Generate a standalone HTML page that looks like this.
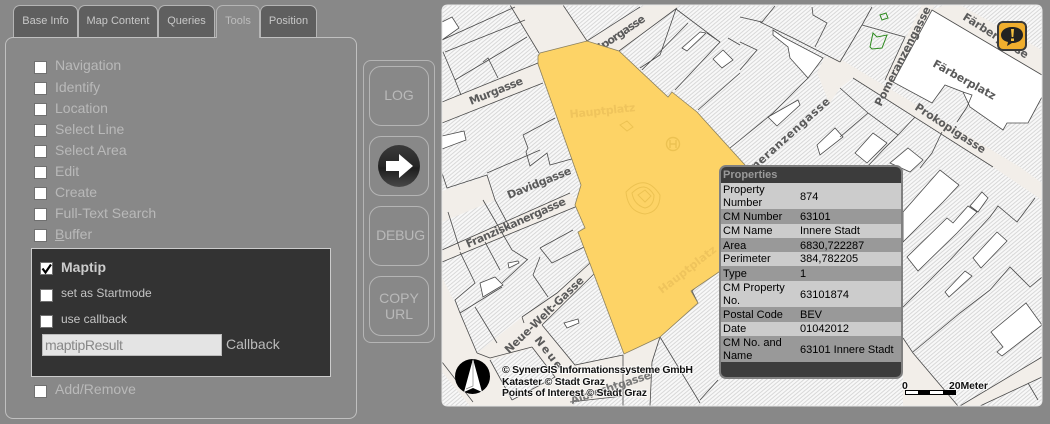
<!DOCTYPE html>
<html><head><meta charset="utf-8">
<style>
html,body{margin:0;padding:0;width:1050px;height:424px;overflow:hidden;background:#888;font-family:"Liberation Sans",sans-serif}
.a{position:absolute;box-sizing:border-box}
.tab{top:5px;height:33px;background:#5f5f5f;border:1px solid #b5b5b5;border-bottom:0;border-radius:7px 7px 0 0;color:#c8c8c8;font-size:11px;line-height:30px;text-align:center}
.cb{background:#fff;border:1px solid #707070;width:13px;height:13px}
.l{font-size:14px;line-height:16px;color:#b9b9b9;left:55px;white-space:nowrap}
.btn{left:369px;width:60px;height:60px;border:1px solid #b5b5b5;border-radius:12px;color:#b9b9b9;font-size:14px;line-height:16px;text-align:center}
.r{left:721px;width:180px;font-size:11px;line-height:13px;color:#000}
.r span{position:absolute;white-space:nowrap;margin-top:1px}
.r .k{left:2px;width:70px;white-space:normal}
.r .v{left:79px}
.lt{background:#ccc}.dk{background:#999}
</style></head><body>

<div class="a tab" style="left:13px;width:65px">Base Info</div>
<div class="a tab" style="left:78px;width:80px">Map Content</div>
<div class="a tab" style="left:158px;width:57px">Queries</div>
<div class="a tab" style="left:216px;width:44px;background:#888;color:#bdbdbd;z-index:3">Tools</div>
<div class="a tab" style="left:260px;width:57px">Position</div>

<div class="a" style="left:5px;top:37px;width:352px;height:382px;border:1px solid #c0c0c0;border-radius:8px;background:#888"></div>

<div class="a cb" style="left:34px;top:61px"></div><div class="a l" style="top:57px">Navigation</div>
<div class="a cb" style="left:34px;top:82px"></div><div class="a l" style="top:79px">Identify</div>
<div class="a cb" style="left:34px;top:103px"></div><div class="a l" style="top:100px">Location</div>
<div class="a cb" style="left:34px;top:124px"></div><div class="a l" style="top:121px">Select Line</div>
<div class="a cb" style="left:34px;top:145px"></div><div class="a l" style="top:142px">Select Area</div>
<div class="a cb" style="left:34px;top:166px"></div><div class="a l" style="top:163px">Edit</div>
<div class="a cb" style="left:34px;top:187px"></div><div class="a l" style="top:184px">Create</div>
<div class="a cb" style="left:34px;top:208px"></div><div class="a l" style="top:205px">Full-Text Search</div>
<div class="a cb" style="left:34px;top:229px"></div><div class="a l" style="top:226px"><u>B</u>uffer</div>

<div class="a" style="left:31px;top:248px;width:300px;height:129px;background:#333;border:1px solid #ccc"></div>
<div class="a cb" style="left:40px;top:262px"></div>
<svg class="a" style="left:40px;top:262px" width="13" height="13"><path d="M2.5 6.5 L5.5 10.5 L11 2.5" fill="none" stroke="#000" stroke-width="2.2"/></svg>
<div class="a l" style="left:61px;top:259px;font-weight:bold;color:#ccc">Maptip</div>
<div class="a cb" style="left:40px;top:289px"></div>
<div class="a l" style="left:61px;top:285px;font-size:12px;color:#c4c4c4">set as Startmode</div>
<div class="a cb" style="left:40px;top:315px"></div>
<div class="a l" style="left:61px;top:311px;font-size:12px;color:#c4c4c4">use callback</div>
<div class="a" style="left:42px;top:334px;width:180px;height:22px;background:#e4e4e4;border:1px solid #bbb;color:#888;font-size:14px;line-height:20px;padding-left:2px;letter-spacing:-.35px">maptipResult</div>
<div class="a l" style="left:226px;top:336px;color:#bbb">Callback</div>
<div class="a cb" style="left:34px;top:385px"></div><div class="a l" style="top:381px">Add/Remove</div>

<div class="a" style="left:363px;top:60px;width:72px;height:283px;border:1px solid #b5b5b5;border-radius:8px"></div>
<div class="a btn" style="top:66px;line-height:56px">LOG</div>
<div class="a btn" style="top:136px"></div>
<svg class="a" style="left:378px;top:145px" width="42" height="42">
<defs><linearGradient id="g" x1="0" y1="0" x2="0" y2="1"><stop offset="0" stop-color="#3a3a3a"/><stop offset=".5" stop-color="#262626"/><stop offset=".55" stop-color="#1e1e1e"/><stop offset="1" stop-color="#484848"/></linearGradient></defs>
<circle cx="21" cy="21" r="21" fill="url(#g)"/>
<path d="M8 16 H21 V9 L35 21 L21 33 V26 H8 Z" fill="#fff"/></svg>
<div class="a btn" style="top:206px;line-height:56px;padding-left:3px;white-space:nowrap;letter-spacing:-.2px">DEBUG</div>
<div class="a btn" style="top:276px;padding-top:13px">COPY<br>URL</div>

<svg class="a" style="left:0;top:0" width="1050" height="424" viewBox="0 0 1050 424">
<defs>
<pattern id="h" width="3" height="3" patternUnits="userSpaceOnUse" patternTransform="rotate(-40)"><rect width="3" height="3" fill="#f8f8f8"/><rect width="3" height="1" fill="#d8d8d8"/></pattern>
<clipPath id="mc"><rect x="442" y="5" width="600" height="401" rx="6"/></clipPath>
</defs>
<g clip-path="url(#mc)">
<rect x="442" y="5" width="600" height="401" fill="url(#h)"/>
<!-- streets -->
<g fill="#f2eee9">
<polygon points="442,102 538,63 543,83 442,123"/>
<polygon points="510,5 563,5 590,43 540,56"/>
<polygon points="587,41 645,5 680,5 619,52"/>
<polygon points="442,250 570,193 580,205 442,262"/>
<polygon points="442,191 487,176 495,200 442,222"/>
<polygon points="442,277 460,313 477,353 522,317 557,293 590,263 596,272 542,325 575,365 623,355 660,337 652,360 650,406 442,406"/>
<polygon points="825,57 842,60 1020,167 1042,183 1042,200 993,167 853,78 840,88 830,103 828,100 817,73"/>
<polygon points="922,5 935,5 893,84 885,80"/>
<polygon points="945,5 960,5 1042,50 1042,75 932,10"/>
<polygon points="903,338 913,353 958,406 903,406"/>
<polygon points="960,406 1042,357 1042,377 980,406"/>
</g>
<g fill="url(#h)">
<polygon points="490,360 532,348 555,377 512,400"/>
<polygon points="442,372 470,406 442,406"/>
<polygon points="570,402 623,396 650,400 650,406 575,406"/>
</g>
<!-- white buildings -->
<g fill="#fff" stroke="#4a4a4a" stroke-width=".8">
<polygon points="932,10 1042,75 1042,97 1028,123 1007,123 1003,130 970,107 963,92 945,85 932,103 893,82"/>
<polygon points="442,22 452,17 459,28 442,40"/>
<polygon points="442,136 464,131 466,140 442,149"/>
<polygon points="903,212 940,170 959,185 943,202 903,242"/>
<polygon points="907,257 947,218 953,223 968,206 977,212 957,233 918,271"/>
<polygon points="970,206 982,192 988,198 978,212"/>
<polygon points="973,258 997,232 1007,241 981,268"/>
<polygon points="945,292 965,271 972,276 949,297"/>
<polygon points="991,332 1026,303 1042,325 1002,356 997,352 1003,347"/>
<polygon points="768,117 798,100 800,105 777,126"/>
<polygon points="817,145 835,128 843,137 820,155"/>
<polygon points="855,153 873,133 887,143 867,163"/>
<polygon points="890,163 908,148 923,160 910,172"/>
<polygon points="773,30 783,37 823,58 808,78 790,58 788,47 773,35"/>
<polygon points="480,283 495,277 503,285 483,297"/>
<polygon points="682,48 700,32 706,33 687,51"/>
<polygon points="713,59 723,50 733,60 722,68"/>
<polygon points="508,263 518,261 519,263 509,268"/>
<polygon points="564,323 578,319 579,323 567,328"/>
</g>
<!-- parcel lines -->
<g fill="none" stroke="#4a4a4a" stroke-width=".8">
<path d="M442 40 L515 7 M445 52 L525 20 M443 52 L455 80 L461 95 M455 80 L527 37 M483 62 L488 58 L498 78 M442 102 L538 63 M442 123 L543 83"/>
<path d="M510 5 L539 53 M563 5 L587 41 L640 7 M619 51 L677 8"/>
<path d="M523 135 L555 118 M523 135 L528 148 L526 152 L530 166 L547 153 L550 165 L575 158 M487 173 L540 150 M442 173 L447 188 L487 175 L495 200 L510 228"/>
<path d="M442 250 L570 193 M442 262 L580 205 M448 212 L460 250 M483 200 L512 250 L528 260 M460 252 L475 283 L455 300 L460 313 L477 353 M485 242 L500 270 M460 313 L502 287 M475 307 L497 343 M502 283 L527 260 M533 275 L540 257 M533 275 L548 297 M540 248 L573 230 M540 248 L552 263 L588 245"/>
<path d="M522 317 L557 293 L590 263 M542 325 L596 272 M524 323 L522 317 M542 325 L575 365 L623 355 M532 347 L555 377 L512 400 M490 358 L532 347 M490 360 L512 400 M442 362 L473 402 M477 353 L490 358 M623 396 L570 402"/>
<path d="M623 355 L623 406 M660 337 L652 362 L650 406 M660 337 L700 403 M700 400 L718 380 M713 272 L692 291 L698 303"/>
<path d="M642 70 L688 23 M640 68 L660 55 L676 9 M676 9 L720 42 L675 90 M707 33 L720 42 M698 110 L740 73 M730 148 L740 140 M728 38 L740 45"/>
<path d="M740 17 L762 22 L775 6 M760 22 L793 38 L840 62 M812 7 L813 15 L827 23 L815 47 M872 7 L862 25 L840 62 M862 25 L905 37 L885 80 M740 42 L757 50 L740 70 M740 140 L773 113 L808 78 M840 88 L868 113 L898 135 L915 117 M868 113 L840 137 M898 135 L883 150 L867 167 M942 132 L932 153 L920 168 M963 92 L972 95 L967 107 L957 122 M853 78 L993 167"/>
<path d="M903 307 L950 260 L990 217 L998 206 L1017 222 L1035 198 M913 352 L960 313 L990 290 L1010 267 L1030 287 L1042 277 M903 338 L913 353 L958 406 M960 406 L1042 357 M980 406 L1042 377 M1028 383 L1038 400 M1042 97 L1042 120"/>
</g>
<path d="M880 15 L886 13 L888 18 L882 20Z M870 47 L873 33 L877 37 L887 35 L882 48 L872 49Z" fill="none" stroke="#2c8a1e" stroke-width="1"/>
<!-- labels -->
<g font-family="'DejaVu Sans',sans-serif" font-weight="bold" font-size="11" fill="#5a5a5a">
<text transform="translate(471,105) rotate(-22)" textLength="57">Murgasse</text>
<text transform="translate(598,53) rotate(-34)" textLength="58">Sporgasse</text>
<text transform="translate(509,199) rotate(-22)" textLength="68">Davidgasse</text>
<text transform="translate(468,248) rotate(-24)" textLength="108">Franziskanergasse</text>
<text transform="translate(509,354) rotate(-44)" textLength="105">Neue-Welt-Gasse</text>
<text transform="translate(534,340) rotate(52)" textLength="38">Neue</text>
<text transform="translate(572,404) rotate(-18)" textLength="84" fill="#777">Albrechtgasse</text>
<text transform="translate(962,19) rotate(32)" textLength="75">Färbergasse</text>
<text transform="translate(932,66) rotate(29)" textLength="70">Färberplatz</text>
<text transform="translate(914,109) rotate(33)" textLength="82">Prokopigasse</text>
<text transform="translate(881,107) rotate(-63)" textLength="110">Pomeranzengasse</text>
<text transform="translate(740,184) rotate(-42)" textLength="122">Pomeranzengasse</text>
</g>
<!-- yellow selection -->
<polygon points="538,56 540,53 587,41 619,51 668,97 672,92 697,112 745,165 760,200 719,272 691,291 698,303 660,337 624,354 578,232 585,228 575,205 581,185 538,64" fill="#fdd366" stroke="#8a8060" stroke-width=".8"/>
<g fill="none" stroke="#ecc252" stroke-width="1">
<circle cx="673" cy="144" r="6.5" stroke-width="1.4"/>
<path d="M670 140 V148 M676 140 V148 M670 144 H676" stroke-width="1.4"/>
<path d="M626 192 Q645 172 660 195 Q660 212 645 214 Q628 212 626 192Z M632 193 Q645 180 654 195 Q654 206 645 208 Q634 205 632 193Z M638 195 L645 190 L651 196 L645 202Z M620 125 L627 121 L633 127 L627 131Z"/>
</g>
<g font-family="'DejaVu Sans',sans-serif" font-weight="bold" font-size="11" fill="#efc45c">
<text transform="translate(570,118) rotate(-6)" textLength="66">Hauptplatz</text>
<text transform="translate(662,294) rotate(-38)" textLength="70">Hauptplatz</text>
</g>
<!-- attribution -->
<g font-family="'Liberation Sans',sans-serif" font-weight="bold" font-size="10.5" fill="#111" stroke="#fff" stroke-width="2" paint-order="stroke" stroke-opacity=".7">
<text x="502" y="373" textLength="191">© SynerGIS Informationssysteme GmbH</text>
<text x="502" y="385" textLength="103">Kataster © Stadt Graz</text>
<text x="502" y="396" textLength="145">Points of Interest © Stadt Graz</text>
<text x="902" y="389" textLength="6">0</text>
<text x="949" y="389" textLength="39">20Meter</text>
</g>
<rect x="905" y="390" width="51" height="5" fill="#000"/>
<rect x="906" y="391" width="12" height="3" fill="#fff"/><rect x="930" y="391" width="13" height="3" fill="#fff"/>
<!-- north arrow -->
<circle cx="472.5" cy="376.5" r="17.5" fill="#000"/>
<path d="M473 359 L482 392 L473 388 L464 392 Z" fill="#fff"/>
<path d="M473 362 L473 386 L466 389" fill="none" stroke="#888" stroke-width=".7"/>
<!-- warning -->
<rect x="998" y="22" width="28" height="28" rx="5" fill="#f0ae2e" stroke="#3a3a3a" stroke-width="2"/>
<path d="M1012 27 C1020 27 1023 31 1023 35 C1023 40 1018 43 1012 43 L1007 46 L1008 42 C1003 41 1001 38 1001 35 C1001 31 1005 27 1012 27Z" fill="#222"/>
<path d="M1011 29 H1014 L1013.3 37 H1011.7Z M1011 38.5 H1014 V41 H1011Z" fill="#f4c040"/>
</g>
<path d="M442 11 Q442 5 448 5 H1036 Q1042 5 1042 11 V400 Q1042 406 1036 406 H448 Q442 406 442 400Z" fill="none" stroke="#e8e8e8" stroke-width="1"/>
</svg>

<!-- popup -->
<div class="a" style="left:719px;top:165px;width:184px;height:214px;background:#3c3c3c;border:2px solid #808080;border-radius:7px"></div>
<div class="a" style="left:723px;top:168px;font-size:11px;font-weight:bold;line-height:14px;color:#999">Properties</div>
<div class="a r lt" style="top:183px;height:26px"><span class="k" style="top:0">Property Number</span><span class="v" style="top:7px">874</span></div>
<div class="a r dk" style="top:209px;height:15px"><span class="k" style="top:1px;width:90px">CM Number</span><span class="v" style="top:1px">63101</span></div>
<div class="a r lt" style="top:224px;height:14px"><span class="k" style="top:0">CM Name</span><span class="v" style="top:0">Innere Stadt</span></div>
<div class="a r dk" style="top:238px;height:14px"><span class="k" style="top:1px">Area</span><span class="v" style="top:1px">6830,722287</span></div>
<div class="a r lt" style="top:252px;height:14px"><span class="k" style="top:0">Perimeter</span><span class="v" style="top:0">384,782205</span></div>
<div class="a r dk" style="top:266px;height:15px"><span class="k" style="top:1px">Type</span><span class="v" style="top:1px">1</span></div>
<div class="a r lt" style="top:281px;height:26px"><span class="k" style="top:0">CM Property No.</span><span class="v" style="top:7px">63101874</span></div>
<div class="a r dk" style="top:307px;height:15px"><span class="k" style="top:1px;width:90px">Postal Code</span><span class="v" style="top:1px">BEV</span></div>
<div class="a r lt" style="top:322px;height:14px"><span class="k" style="top:0">Date</span><span class="v" style="top:0">01042012</span></div>
<div class="a r dk" style="top:336px;height:26px"><span class="k" style="top:0">CM No. and Name</span><span class="v" style="top:7px">63101 Innere Stadt</span></div>
</body></html>
